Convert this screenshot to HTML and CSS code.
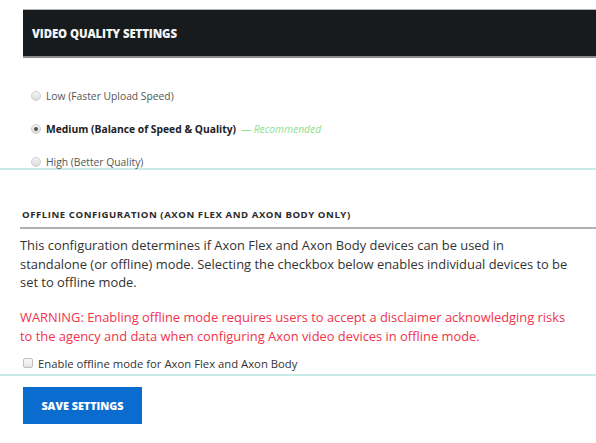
FILE: index.html
```html
<!DOCTYPE html>
<html>
<head>
<meta charset="utf-8">
<link rel="stylesheet" href="styles.css">
</head>
<body>
<div class="page">
  <section class="video">
    <div class="bar"><span class="bar-title">VIDEO QUALITY SETTINGS</span></div>
    <div class="options">
      <div class="opt"><span class="radio"></span><span class="opt-label">Low (Faster Upload Speed)</span></div>
      <div class="opt"><span class="radio checked"></span><span class="opt-label strong">Medium (Balance of Speed &amp; Quality)</span><span class="rec">— Recommended</span></div>
      <div class="opt"><span class="radio"></span><span class="opt-label">High (Better Quality)</span></div>
    </div>
  </section>
  <div class="rule"></div>
  <section class="offline">
    <h2 class="off-title">OFFLINE CONFIGURATION (AXON FLEX AND AXON BODY ONLY)</h2>
    <p class="desc">This configuration determines if Axon Flex and Axon Body devices can be used in standalone (or offline) mode. Selecting the checkbox below enables individual devices to be set to offline mode.</p>
    <p class="warn">WARNING: Enabling offline mode requires users to accept a disclaimer acknowledging risks to the agency and data when configuring Axon video devices in offline mode.</p>
    <div class="check-row"><span class="checkbox"></span><span class="check-label">Enable offline mode for Axon Flex and Axon Body</span></div>
  </section>
  <div class="rule"></div>
  <div class="actions"><button class="save">SAVE SETTINGS</button></div>
</div>
</body>
</html>
```
FILE: styles.css
```css
html, body { margin: 0; padding: 0; background: #fff; }
body { font-family: "Open Sans", "Liberation Sans", sans-serif; color: #333; }
.page { width: 596px; padding-top: 9px; }
.video { padding-left: 23px; }
.bar {
  background: #181b1e;
  border-top: 1px solid #b4b4b4;
  border-bottom: 2px solid #8c8c8c;
  height: 46px;
  display: flex;
  align-items: center;
  padding-left: 9px;
}
.bar-title { color: #f4f4f4; font-weight: 800; font-size: 11.4px; letter-spacing: -0.1px; margin-top: 1px; }
.options { display: flex; flex-direction: column; gap: 19px; padding-top: 31px; padding-left: 8px; }
.opt { display: flex; align-items: center; height: 14px; font-size: 10.3px; color: #555; }
.radio {
  width: 8px; height: 8px; border-radius: 50%;
  border: 1px solid #cfcfcf;
  background: linear-gradient(#f4f4f4, #dcdcdc);
  margin-right: 5px; position: relative; flex: none;
}
.radio.checked::after {
  content: ""; position: absolute; left: 2px; top: 2px; width: 4px; height: 4px; border-radius: 50%; background: #555;
}
.opt-label.strong { font-weight: 700; color: #222; }
.rec { color: #8fe08f; font-style: italic; margin-left: 5px; }
.rule { height: 2px; background: #c9ebe8; margin-top: -1px; }
.offline { padding-left: 20px; padding-top: 38px; }
.off-title {
  margin: 0; font-size: 9.6px; font-weight: 700; letter-spacing: 0.55px; color: #2a2a2a;
  padding-left: 2px; padding-bottom: 5px; border-bottom: 2px solid #b0b0b0; line-height: 14px;
}
.desc, .warn { margin: 0; font-size: 12.9px; line-height: 18.5px; padding-right: 28px; }
.desc { margin-top: 7px; color: #333; }
.warn { margin-top: 16.5px; color: #f3324b; }
.check-row { display: flex; align-items: center; margin-top: 11px; padding-left: 3px; height: 14px; font-size: 11.3px; color: #333; }
.checkbox {
  width: 8px; height: 8px; border: 1px solid #bfbfbf; border-radius: 2px;
  background: linear-gradient(#fafafa, #e4e4e4); margin-right: 5px; flex: none;
}
.check-label { color: #333; }
.offline + .rule { margin-top: 4px; }
.actions { padding-left: 23px; padding-top: 11px; }
.save {
  width: 119px; height: 37px; border: none; background: #0b6cd0; color: #fff;
  font-family: inherit; font-weight: 800; font-size: 10.8px; letter-spacing: 0; padding: 0; margin: 0;
}
```
